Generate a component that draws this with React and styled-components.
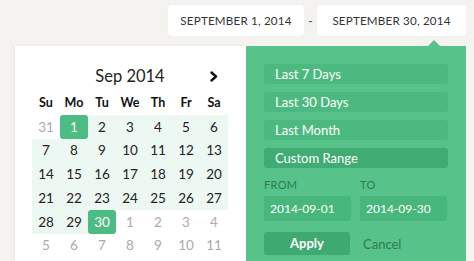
import React from "react";
import styled, { createGlobalStyle, css } from "styled-components";

const GlobalStyle = createGlobalStyle`
    html, body {
        margin: 0;
        padding: 0;
        background: #f4f3ef;
        font-family: Lato, "Open Sans", sans-serif;
        color: #333;
    }
`;

const Page = styled.div`
    width: 474px;
    height: 261px;
    overflow: hidden;
`;

const TopBar = styled.div`
    display: flex;
    justify-content: flex-end;
    align-items: center;
    padding: 5px 8px 0 0;
`;

const DateBox = styled.div`
    background: #fff;
    border-radius: 3px;
    height: 31px;
    width: ${(p) => p.width}px;
    display: flex;
    align-items: center;
    justify-content: center;
    font-size: 11.6px;
    letter-spacing: 0.2px;
    color: #333;
    box-shadow: 0 0 1px rgba(0, 0, 0, 0.08);
`;

const Dash = styled.span`
    width: 13px;
    text-align: center;
    font-size: 13px;
    color: #555;
`;

const Popup = styled.div`
    display: flex;
    margin: 10px 8px 0 15px;
    height: 220px;
`;

const CalendarPanel = styled.div`
    width: 231px;
    background: #fff;
    padding: 20px 0 0 17px;
    box-sizing: border-box;
    box-shadow: -1px 0 4px rgba(0, 0, 0, 0.06);
`;

const MonthRow = styled.div`
    width: 196px;
    height: 20px;
    position: relative;
    display: flex;
    justify-content: center;
    align-items: center;
    font-size: 16.5px;
    color: #222;
`;

const NextArrow = styled.svg`
    position: absolute;
    right: 9px;
    top: 5px;
`;

const Grid = styled.div`
    display: grid;
    grid-template-columns: repeat(7, 28px);
    grid-auto-rows: 23.75px;
    margin-top: 5px;
`;

const WeekDay = styled.div`
    display: flex;
    align-items: center;
    justify-content: center;
    font-size: 12.5px;
    font-weight: 700;
    color: #111;
    height: 22px;
    margin-bottom: 2px;
`;

const Day = styled.div`
    display: flex;
    align-items: center;
    justify-content: center;
    font-size: 13.5px;
    color: ${(p) => (p.muted ? "#aaa" : "#222")};
    ${(p) =>
        p.inRange &&
        css`
            background: #eef8f2;
        `}
    ${(p) =>
        p.selected &&
        css`
            background: #4dbb84;
            color: #fff;
            border-radius: 3px;
        `}
`;

const RangePanel = styled.div`
    flex: 1;
    background: #58c28b;
    position: relative;
    padding: 18px 18px 0 18px;
    box-sizing: border-box;
`;

const Caret = styled.div`
    position: absolute;
    top: -6px;
    right: 26px;
    width: 0;
    height: 0;
    border-left: 6px solid transparent;
    border-right: 6px solid transparent;
    border-bottom: 6px solid #58c28b;
`;

const RangeButton = styled.div`
    height: 20px;
    line-height: 20px;
    border-radius: 3px;
    padding-left: 11px;
    margin-bottom: 8px;
    font-size: 13px;
    color: #fff;
    background: ${(p) => (p.active ? "#40ab73" : "#4cba80")};
`;

const Fields = styled.div`
    display: grid;
    grid-template-columns: 87px 87px;
    column-gap: 9px;
    margin-top: 10px;
`;

const Label = styled.div`
    font-size: 11px;
    height: 14px;
    line-height: 14px;
    margin-bottom: 4px;
    color: #2c7d52;
    letter-spacing: 0.3px;
`;

const Input = styled.div`
    height: 25px;
    line-height: 25px;
    padding-left: 6px;
    font-size: 12px;
    color: #fff;
    background: #48b77c;
    border-radius: 2px;
`;

const Actions = styled.div`
    display: flex;
    align-items: center;
    margin-top: 11px;
`;

const ApplyButton = styled.div`
    width: 86px;
    height: 23px;
    line-height: 23px;
    text-align: center;
    border-radius: 3px;
    background: #3ea970;
    color: #fff;
    font-size: 13px;
    font-weight: 700;
`;

const CancelLink = styled.span`
    margin-left: 13px;
    font-size: 13px;
    color: #2c7d52;
`;

const weekDays = ["Su", "Mo", "Tu", "We", "Th", "Fr", "Sa"];

const buildDays = () => {
    const days = [{ n: 31, muted: true }];
    for (let i = 1; i <= 30; i++) {
        days.push({ n: i, selected: i === 1 || i === 30, inRange: i > 1 && i < 30 });
    }
    for (let i = 1; i <= 11; i++) days.push({ n: i, muted: true });
    return days;
};

const App = () => {
    const days = buildDays();

    return (
        <Page>
            <GlobalStyle />
            <TopBar>
                <DateBox width={136}>SEPTEMBER 1, 2014</DateBox>
                <Dash>-</Dash>
                <DateBox width={149}>SEPTEMBER 30, 2014</DateBox>
            </TopBar>
            <Popup>
                <CalendarPanel>
                    <MonthRow>
                        Sep 2014
                        <NextArrow width="10" height="11" viewBox="0 0 10 11">
                            <path d="M2.5 1.5 L7 5.5 L2.5 9.5" fill="none" stroke="#111" strokeWidth="2.4" strokeLinecap="round" strokeLinejoin="round" />
                        </NextArrow>
                    </MonthRow>
                    <Grid>
                        {weekDays.map((d) => (
                            <WeekDay key={d}>{d}</WeekDay>
                        ))}
                        {days.map((d, i) => (
                            <Day key={i} muted={d.muted} selected={d.selected} inRange={d.inRange}>
                                {d.n}
                            </Day>
                        ))}
                    </Grid>
                </CalendarPanel>
                <RangePanel>
                    <Caret />
                    <RangeButton>Last 7 Days</RangeButton>
                    <RangeButton>Last 30 Days</RangeButton>
                    <RangeButton>Last Month</RangeButton>
                    <RangeButton active>Custom Range</RangeButton>
                    <Fields>
                        <div>
                            <Label>FROM</Label>
                            <Input>2014-09-01</Input>
                        </div>
                        <div>
                            <Label>TO</Label>
                            <Input>2014-09-30</Input>
                        </div>
                    </Fields>
                    <Actions>
                        <ApplyButton>Apply</ApplyButton>
                        <CancelLink>Cancel</CancelLink>
                    </Actions>
                </RangePanel>
            </Popup>
        </Page>
    );
};

export default App;
